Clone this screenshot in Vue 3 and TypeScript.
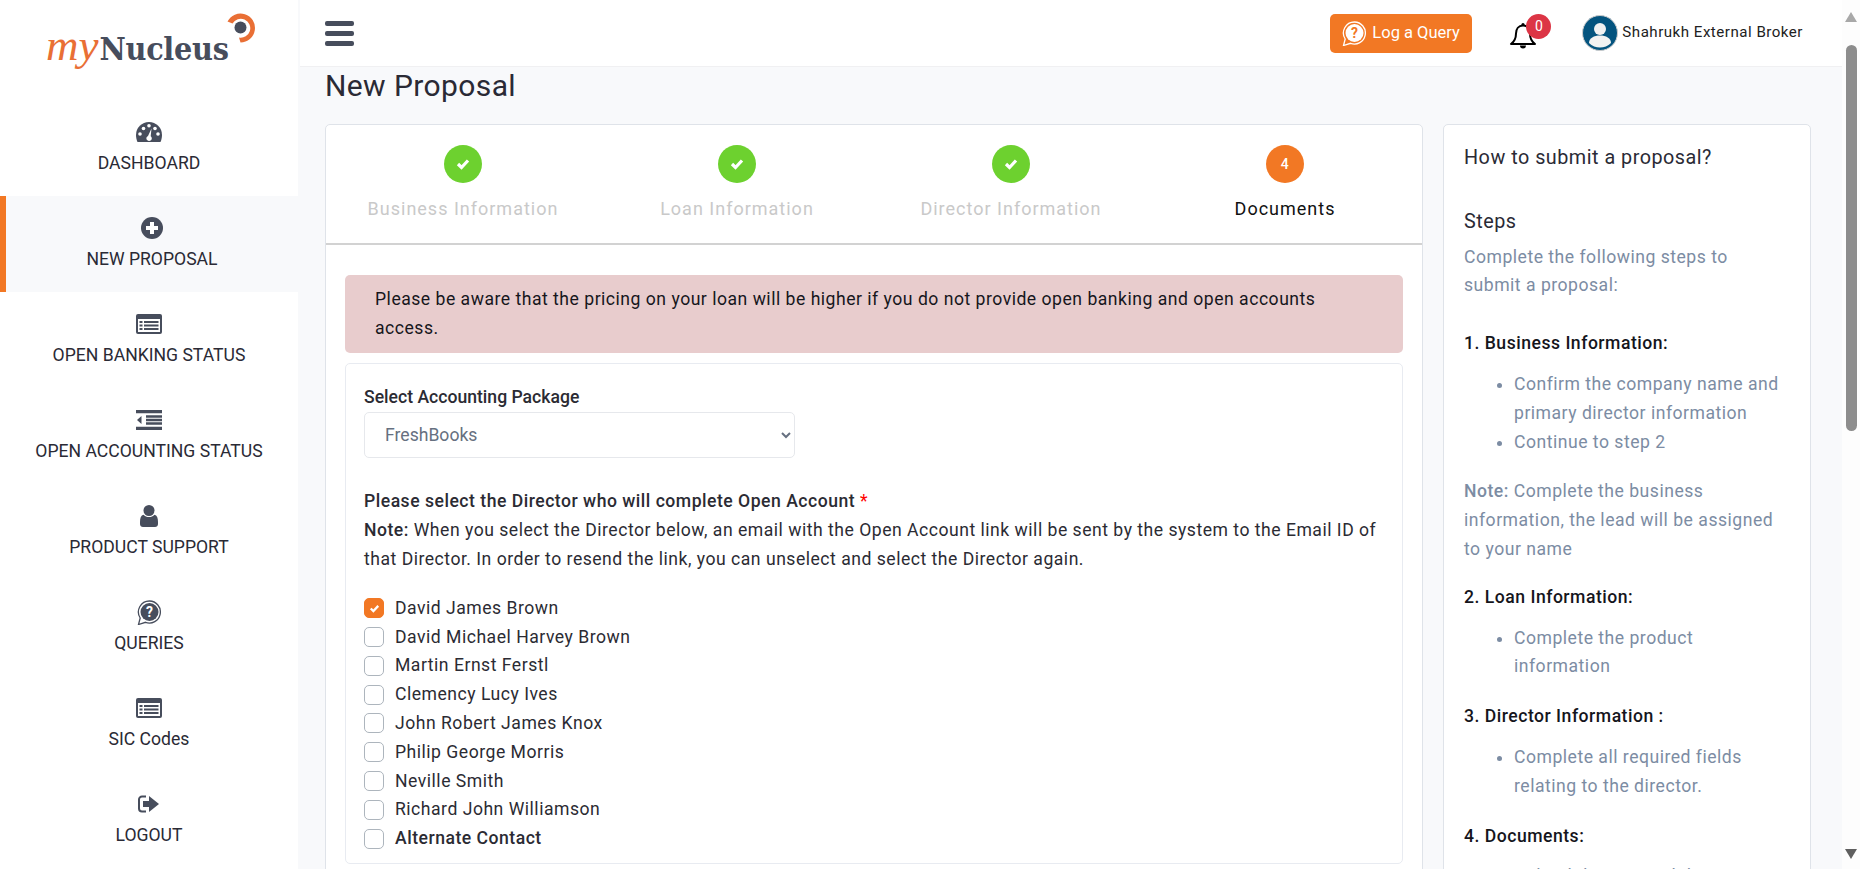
<script setup lang="ts">
const menu = [
  { label: 'DASHBOARD', icon: 'gauge' },
  { label: 'NEW PROPOSAL', icon: 'plus', active: true },
  { label: 'OPEN BANKING STATUS', icon: 'list' },
  { label: 'OPEN ACCOUNTING STATUS', icon: 'outdent' },
  { label: 'PRODUCT SUPPORT', icon: 'user' },
  { label: 'QUERIES', icon: 'query' },
  { label: 'SIC Codes', icon: 'list' },
  { label: 'LOGOUT', icon: 'logout' },
]

const steps = [
  { label: 'Business Information', done: true },
  { label: 'Loan Information', done: true },
  { label: 'Director Information', done: true },
  { label: 'Documents', done: false },
]

const directors = [
  { name: 'David James Brown', checked: true },
  { name: 'David Michael Harvey Brown' },
  { name: 'Martin Ernst Ferstl' },
  { name: 'Clemency Lucy Ives' },
  { name: 'John Robert James Knox' },
  { name: 'Philip George Morris' },
  { name: 'Neville Smith' },
  { name: 'Richard John Williamson' },
  { name: 'Alternate Contact', bold: true },
]
</script>

<template>
  <div class="app">
    <aside class="sidebar">
      <div class="logo">
        <span class="logo-my">my</span><span class="logo-name">Nucleus</span>
        <svg class="logo-mark" width="32" height="32" viewBox="0 0 32 32">
          <path d="M2.500 9.500A14.500 14.500 0 1 1 15.500 30.500L14 25.500A9.500 9.500 0 1 0 7.500 11.500Z" fill="#e96f35" />
          <circle cx="15.500" cy="15.500" r="6" fill="#474d5c" />
        </svg>
      </div>
      <nav>
        <a v-for="item in menu" :key="item.label" class="nav-item" :class="{ active: item.active }">
          <span class="nav-icon">
            <svg v-if="item.icon === 'gauge'" width="26" height="20" viewBox="0 0 26 20">
              <path d="M13 0A13 13 0 0 0 0 13c0 2.500.6 5 1.500 7h23c.9-2 1.500-4.500 1.500-7A13 13 0 0 0 13 0z" fill="#474d5c" />
              <g fill="#fff">
                <circle cx="4" cy="12" r="1.800" />
                <circle cx="7.500" cy="6.500" r="1.800" />
                <circle cx="13" cy="3.800" r="1.800" />
                <circle cx="19" cy="6.500" r="1.800" />
                <circle cx="22" cy="12" r="1.800" />
                <path d="M15.500 6.500L14.700 14.200a2.700 2.700 0 1 1-2.700-.3z" />
              </g>
            </svg>
            <svg v-else-if="item.icon === 'plus'" width="22" height="22" viewBox="0 0 22 22">
              <circle cx="11" cy="11" r="11" fill="#474d5c" />
              <path d="M9 5h4v4h4v4h-4v4H9v-4H5V9h4z" fill="#fff" />
            </svg>
            <svg v-else-if="item.icon === 'list'" width="26" height="20" viewBox="0 0 26 20">
              <rect width="26" height="20" rx="2" fill="#474d5c" />
              <rect x="2" y="5" width="22" height="13" fill="#fff" />
              <path d="M3.500 7h3v2h-3zM3.500 10.500h3v2h-3zM3.500 14h3v2h-3zM8 7h14.500v2H8zM8 10.500h14.500v2H8zM8 14h14.500v2H8z" fill="#474d5c" />
            </svg>
            <svg v-else-if="item.icon === 'outdent'" width="26" height="20" viewBox="0 0 26 20">
              <path d="M0 0h26v3.200H0zM0 16.800h26V20H0zM10 5.300h16v2.400H10zM10 8.800h16v2.400H10zM10 12.300h16v2.400H10zM1 10l4.500-4v8z" fill="#474d5c" />
            </svg>
            <svg v-else-if="item.icon === 'user'" width="18" height="22" viewBox="0 0 18 22">
              <circle cx="9" cy="5.500" r="5.500" fill="#474d5c" />
              <path d="M3.500 9.700C5 11.300 6.800 12 9 12s4-.7 5.500-2.300C17 10.300 18 13 18 17v2c0 1.700-1.300 3-3 3H3c-1.700 0-3-1.300-3-3v-2c0-4 1-6.700 3.500-7.300z" fill="#474d5c" />
            </svg>
            <svg v-else-if="item.icon === 'query'" width="24" height="25" viewBox="0 0 24 25">
              <path d="M12.500 1a11 11 0 1 1-4 21.300L1.500 24.500l1.700-6.500A11 11 0 0 1 12.500 1z" fill="#fff" stroke="#474d5c" stroke-width="1.300" />
              <circle cx="12.500" cy="12" r="9" fill="#474d5c" />
              <text x="12.500" y="17" text-anchor="middle" class="q-mark" fill="#fff">?</text>
            </svg>
            <svg v-else width="22" height="18" viewBox="0 0 22 18">
              <path d="M8 1.500H4A3 3 0 0 0 1 4.500v9a3 3 0 0 0 3 3h4" fill="none" stroke="#474d5c" stroke-width="2" />
              <path d="M5 6h6V1l10 8-10 8v-5H5z" fill="#474d5c" />
            </svg>
          </span>
          <span class="nav-label">{{ item.label }}</span>
        </a>
      </nav>
    </aside>

    <div class="main">
      <header class="topbar">
        <div class="burger"><i></i><i></i><i></i></div>
        <div class="top-right">
          <button class="query-btn">
            <svg width="24" height="25" viewBox="0 0 24 25">
              <path d="M12.500 1a11 11 0 1 1-4 21.300L1.500 24.500l1.700-6.500A11 11 0 0 1 12.500 1z" fill="none" stroke="#fff" stroke-width="1.300" />
              <circle cx="12.500" cy="12" r="9" fill="#fff" />
              <text x="12.500" y="17" text-anchor="middle" class="q-mark" fill="#f27824">?</text>
            </svg>
            Log a Query
          </button>
          <div class="bell">
            <svg width="28" height="30" viewBox="0 0 28 30">
              <path d="M14 4.500c-4.500 0-7 3.500-7 8 0 5-1.500 8-5 10.500h24c-3.500-2.500-5-5.500-5-10.500 0-4.500-2.500-8-7-8z" fill="none" stroke="#000" stroke-width="2" stroke-linejoin="round" />
              <circle cx="14" cy="3.500" r="1.600" />
              <path d="M11 24.500a3 3 0 0 0 6 0z" />
            </svg>
            <span class="badge">0</span>
          </div>
          <div class="avatar">
            <svg width="36" height="36" viewBox="0 0 36 36">
              <circle cx="18" cy="18" r="17.500" fill="#04547f" stroke="#ccc" />
              <circle cx="18" cy="14" r="6" fill="#f1f2f2" />
              <path d="M7 28c0-5 5-7.500 11-7.500S29 23 29 28c-3 3-7 4.500-11 4.500S10 31 7 28z" fill="#f1f2f2" />
            </svg>
          </div>
          <span class="user-name">Shahrukh External Broker</span>
        </div>
      </header>

      <div class="content">
        <h1 class="page-title">New Proposal</h1>
        <div class="columns">
          <section class="card wizard">
            <div class="steps">
              <div v-for="(step, i) in steps" :key="step.label" class="step" :class="{ current: !step.done }">
                <span class="step-dot">
                  <svg v-if="step.done" width="14" height="12" viewBox="0 0 14 12">
                    <path d="M2 6l3.500 3.500L12 2.500" fill="none" stroke="#fff" stroke-width="3.200" />
                  </svg>
                  <template v-else>{{ i + 1 }}</template>
                </span>
                <span class="step-label">{{ step.label }}</span>
              </div>
            </div>
            <div class="wizard-body">
              <div class="alert">
                Please be aware that the pricing on your loan will be higher if you do not provide open banking and open accounts access.
              </div>
              <div class="inner-box">
                <label class="field-label">Select Accounting Package</label>
                <select class="package">
                  <option>FreshBooks</option>
                </select>
                <p class="director-title">
                  <b>Please select the Director who will complete Open Account</b> <span class="req">*</span><br />
                  <b>Note:</b> When you select the Director below, an email with the Open Account link will be sent by the system to the Email ID of that Director. In order to resend the link, you can unselect and select the Director again.
                </p>
                <div v-for="d in directors" :key="d.name" class="check-row">
                  <span class="check" :class="{ on: d.checked }">
                    <svg v-if="d.checked" width="11" height="9" viewBox="0 0 14 12">
                      <path d="M2 6l3.500 3.500L12 2.500" fill="none" stroke="#fff" stroke-width="3" />
                    </svg>
                  </span>
                  <span :class="{ strong: d.bold }">{{ d.name }}</span>
                </div>
              </div>
            </div>
          </section>

          <aside class="card help">
            <h5 class="help-title">How to submit a proposal?</h5>
            <h6 class="help-sub">Steps</h6>
            <p class="intro">Complete the following steps to submit a proposal:</p>
            <h6 class="help-head">1. Business Information:</h6>
            <ul>
              <li>Confirm the company name and primary director information</li>
              <li>Continue to step 2</li>
            </ul>
            <p class="note"><b>Note:</b> Complete the business information, the lead will be assigned to your name</p>
            <h6 class="help-head">2. Loan Information:</h6>
            <ul>
              <li>Complete the product information</li>
            </ul>
            <h6 class="help-head">3. Director Information :</h6>
            <ul>
              <li>Complete all required fields relating to the director.</li>
            </ul>
            <h6 class="help-head">4. Documents:</h6>
            <ul>
              <li>Upload the required documents</li>
            </ul>
          </aside>
        </div>
      </div>
    </div>

    <div class="scrollbar">
      <span class="arrow up"></span>
      <span class="thumb"></span>
      <span class="arrow down"></span>
    </div>
  </div>
</template>

<style>
html,
body {
  margin: 0;
  overflow: hidden;
}
</style>

<style scoped>
.app {
  display: flex;
  height: 869px;
  overflow: hidden;
  background: #f8f9fb;
  font-family: Roboto, 'Liberation Sans', sans-serif;
  font-size: 17.6px;
  line-height: 28.8px;
  letter-spacing: 0.5px;
  color: #2b2b33;
}

.sidebar {
  width: 298px;
  flex-shrink: 0;
  background: #fff;
  margin-right: 2px;
}

.logo {
  position: relative;
  height: 100px;
  box-sizing: border-box;
  padding: 23px 0 0 46px;
  line-height: 44px;
  white-space: nowrap;
  letter-spacing: 0;
}

.logo-my {
  font-family: 'Liberation Serif', serif;
  font-style: italic;
  font-size: 45px;
  margin-right: 1px;
  color: #e96f35;
}

.logo-name {
  font-family: 'DejaVu Serif', serif;
  font-weight: 700;
  font-stretch: condensed;
  font-size: 32px;
  letter-spacing: -0.3px;
  color: #474d5c;
}

.logo-mark {
  position: absolute;
  left: 225px;
  top: 12px;
}

.nav-item {
  display: flex;
  flex-direction: column;
  align-items: center;
  height: 96px;
  box-sizing: border-box;
  padding-top: 20px;
  color: #2a2a35;
  letter-spacing: 0;
}

.nav-item.active {
  background: #f8f9fb;
  border-left: 6px solid #f27824;
}

.nav-icon {
  height: 24px;
  display: flex;
  align-items: center;
  margin-bottom: 7px;
}

.nav-label {
  line-height: 24px;
}

.q-mark {
  font-family: Roboto, sans-serif;
  font-weight: 700;
  font-size: 14px;
}

.main {
  flex: 1;
  min-width: 0;
  display: flex;
  flex-direction: column;
}

.topbar {
  height: 67px;
  flex-shrink: 0;
  display: flex;
  align-items: center;
  justify-content: space-between;
  box-sizing: border-box;
  padding: 0 39px 0 25px;
  background: #fff;
  border-bottom: 1px solid #f0f0f2;
}

.burger {
  display: flex;
  flex-direction: column;
  gap: 5px;
  width: 29px;
}

.burger i {
  display: block;
  height: 5px;
  border-radius: 2px;
  background: #474d5c;
}

.top-right {
  display: flex;
  align-items: center;
}

.query-btn {
  display: flex;
  align-items: center;
  gap: 6px;
  width: 142px;
  height: 39px;
  padding: 0 0 0 12px;
  border: 0;
  border-radius: 5px;
  background: #f27824;
  color: #fff;
  font: inherit;
  font-size: 16.5px;
  letter-spacing: 0;
}

.bell {
  position: relative;
  display: flex;
  width: 40px;
  margin-left: 37px;
  margin-right: 33px;
  margin-top: 6px;
}

.badge {
  position: absolute;
  left: 17px;
  top: -7px;
  width: 25px;
  height: 25px;
  border-radius: 50%;
  background: #dc3545;
  color: #fff;
  font-size: 14px;
  line-height: 25px;
  text-align: center;
  letter-spacing: 0;
}

.avatar {
  display: flex;
  margin-right: 4px;
}

.user-name {
  font-size: 15.1px;
  line-height: 20px;
  color: #212121;
  margin-top: -3px;
}

.content {
  flex: 1;
  min-height: 0;
  padding: 0 31px 0 25px;
}

.page-title {
  margin: 0;
  height: 57px;
  font-size: 30px;
  font-weight: 400;
  line-height: 37px;
  letter-spacing: 0.4px;
  color: #2a2a35;
}

.columns {
  display: flex;
  gap: 20px;
  align-items: flex-start;
}

.card {
  background: #fff;
  border: 1px solid #dfe3e9;
  border-radius: 5px;
  box-sizing: border-box;
}

.wizard {
  width: 1098px;
  padding-bottom: 40px;
}

.steps {
  display: flex;
  height: 120px;
  box-sizing: border-box;
  border-bottom: 2px solid #d2d2d2;
}

.step {
  flex: 1;
  display: flex;
  flex-direction: column;
  align-items: center;
  padding-top: 20px;
}

.step-dot {
  display: flex;
  align-items: center;
  justify-content: center;
  width: 38px;
  height: 38px;
  border-radius: 50%;
  background: #6dd12f;
  color: #fff;
  font-size: 14px;
  font-weight: 500;
}

.step.current .step-dot {
  background: #f27824;
}

.step-label {
  margin-top: 12px;
  font-size: 18px;
  letter-spacing: 1px;
  color: #c9c9c9;
}

.step.current .step-label {
  color: #111;
}

.wizard-body {
  padding: 30px 19px 0;
}

.alert {
  padding: 10px 30px;
  border-radius: 5px;
  background: #e8cccd;
  color: #16161c;
}

.inner-box {
  margin-top: 10px;
  box-sizing: border-box;
  padding: 19px 18px 10px;
  border: 1px solid #e8ebf1;
  border-radius: 5px;
}

.field-label {
  display: block;
  font-weight: 500;
  letter-spacing: 0;
}

.package {
  display: block;
  width: 431px;
  height: 46px;
  margin-top: 1px;
  padding: 0 16px;
  border: 1px solid #e6e8ec;
  border-radius: 5px;
  background: #fff;
  color: #667080;
  font: inherit;
}

.director-title {
  margin: 29px 0 20px;
}

.director-title b {
  font-weight: 500;
}

.req {
  color: #f00;
}

.check-row {
  display: flex;
  align-items: center;
  gap: 11px;
  height: 28.8px;
}

.check {
  display: flex;
  align-items: center;
  justify-content: center;
  width: 20px;
  height: 20px;
  box-sizing: border-box;
  border: 1px solid #adb5bd;
  border-radius: 5px;
  background: #fff;
}

.check.on {
  border-color: #f27824;
  background: #f27824;
}

.strong {
  font-weight: 500;
}

.help {
  width: 368px;
  height: 800px;
  padding: 19px 24px 0 20px;
  color: #7c8ca3;
}

.help h5,
.help h6 {
  margin: 0;
  font-weight: 400;
  color: #2a2a35;
}

.help-title {
  font-size: 19.8px;
  margin-bottom: 35px !important;
}

.help-sub {
  font-size: 19.8px;
  margin-bottom: 6px !important;
}

.intro {
  margin: 0 0 29px;
}

.help h6.help-head {
  font-size: 17.6px;
  font-weight: 500;
  margin-bottom: 12px;
  color: #15151c;
}

.help ul {
  margin: 0 0 21px;
  padding-left: 50px;
}

.note {
  margin: 0 0 19px;
}

.note b {
  font-weight: 500;
}

.scrollbar {
  position: relative;
  width: 18px;
  flex-shrink: 0;
  background: #fdfdfd;
  display: flex;
  flex-direction: column;
  align-items: center;
}

.thumb {
  width: 11px;
  height: 386px;
  margin-top: 23px;
  border-radius: 6px;
  background: #8d8d8d;
}

.arrow {
  width: 0;
  height: 0;
  border-left: 6px solid transparent;
  border-right: 6px solid transparent;
}

.arrow.up {
  margin-top: 12px;
  border-bottom: 10px solid #a8a8a8;
}

.arrow.down {
  margin-top: auto;
  margin-bottom: 10px;
  border-top: 10px solid #5f5f5f;
}
</style>
